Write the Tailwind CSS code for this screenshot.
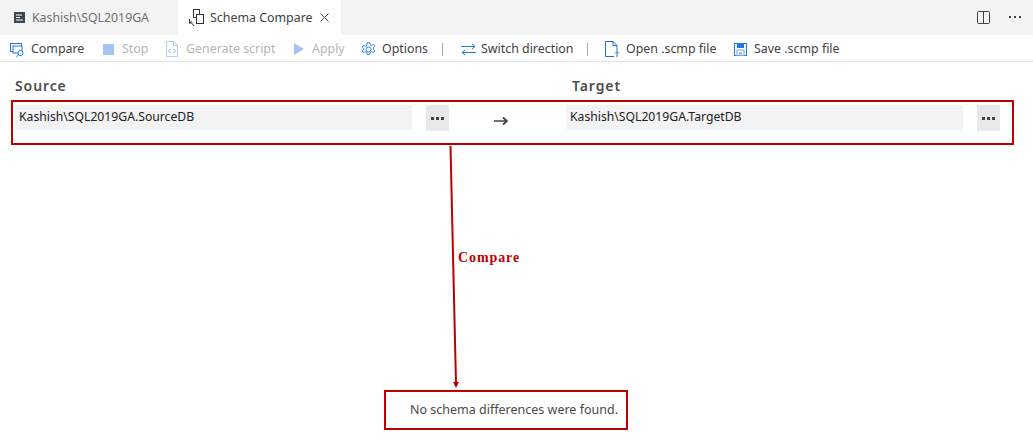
<!DOCTYPE html>
<html lang="en">
<head>
    <meta charset="UTF-8">
    <title>Schema Compare</title>
    <script src="https://cdn.jsdelivr.net/npm/@tailwindcss/browser@4"></script>
</head>
<body class="relative h-[443px] w-[1033px] overflow-hidden bg-white font-['Noto_Sans',sans-serif] text-[12.4px] text-[#424242]">

    <!-- Tabs -->
    <div class="flex h-[35px] items-center bg-[#f3f3f3]">
        <div class="flex h-full w-[178px] items-center pl-[14px] text-[12.3px] text-[#6f6f6f]">
            <svg class="mr-[7px] h-[11px] w-[11px]" viewBox="0 0 11 11"><rect width="11" height="11" fill="#3c4650"/><path d="M2 3h6M2 5.500h4M2 8h7" stroke="#fff" stroke-width="1"/></svg>
            <span class="pt-px">Kashish\SQL2019GA</span>
        </div>
        <div class="flex h-full w-[163px] items-center bg-white pl-[10px]">
            <svg class="mr-[6px] h-[19px] w-[16px]" viewBox="0 0 16 19" fill="none" stroke="#333"><rect x="5.500" y="1.500" width="6" height="8"/><rect x="8.500" y="6.500" width="7" height="9" fill="#fff"/><path d="M1.500 11v4h3M3.500 13l-2 2.500M6 18l-2-2.500" stroke-width="1"/></svg>
            <span class="pt-px">Schema Compare</span>
            <svg class="ml-[7px] h-[9px] w-[9px]" viewBox="0 0 9 9" stroke="#424242"><path d="M.5.5l8 8M8.500.5l-8 8"/></svg>
        </div>
        <div class="ml-auto mr-[12px] flex items-center gap-[19px]">
            <svg class="h-[14px] w-[13px]" viewBox="0 0 13 14" fill="none" stroke="#424242"><rect x=".5" y=".5" width="12" height="12" rx="1"/><path d="M6.500.5v12"/></svg>
            <svg class="h-[3px] w-[12px]" viewBox="0 0 12 3" fill="#424242"><rect x="0" width="2" height="2"/><rect x="5" width="2" height="2"/><rect x="10" width="2" height="2"/></svg>
        </div>
    </div>

    <!-- Toolbar -->
    <div class="flex h-[27px] items-center border-b border-[#e5e5e5] pl-[10px] pt-[2px]">
        <svg class="mr-[6px] h-[15px] w-[15px]" viewBox="0 0 15 15" fill="none" stroke="#1f78e6"><rect x=".5" y="1.500" width="11" height="8"/><rect x="3" y="4" width="9" height="7" fill="#fff"/><circle cx="10.500" cy="11" r="2.500" fill="#fff"/><path d="M8.500 13l-2 1.500" stroke="#1d5fb8"/></svg>
        <span class="w-[54px] whitespace-nowrap">Compare</span>
        <span class="ml-[18px] mr-[8px] h-[11px] w-[11px] bg-[#a3c4f2]"></span>
        <span class="w-[26px] whitespace-nowrap text-[#b5b5b5]">Stop</span>
        <svg class="ml-[18px] mr-[8px] h-[16px] w-[12px]" viewBox="0 0 12 16" fill="none" stroke="#b5cff2"><path d="M.5.5h7l4 4v11h-11zM7.500.5v4h4"/><path d="M4.500 8l-2 2 2 2M7.500 8l2 2-2 2" stroke="#8fb4ea"/></svg>
        <span class="w-[89px] whitespace-nowrap text-[#b5b5b5]">Generate script</span>
        <svg class="ml-[19px] mr-[8px] h-[12px] w-[10px]" viewBox="0 0 10 12" fill="#a3c4f2"><path d="M0 0l10 6-10 6z"/></svg>
        <span class="w-[33px] whitespace-nowrap text-[#b5b5b5]">Apply</span>
        <svg class="ml-[16px] mr-[6px] h-[15px] w-[15px]" viewBox="0 0 15 15" fill="none" stroke="#2f80e4"><circle cx="7.500" cy="7.500" r="2.500"/><path d="M6.200.7h2.600l.4 2 1.500.7 1.800-1 1.300 1.900-1.500 1.400v1.700l1.500 1.400-1.300 1.900-1.800-1-1.500.7-.4 2H6.200l-.4-2-1.500-.7-1.800 1-1.300-1.900 1.500-1.400V6.700L1.200 5.300l1.300-1.900 1.800 1 1.500-.7z"/></svg>
        <span class="w-[46px] whitespace-nowrap">Options</span>
        <span class="ml-[14px] h-[13px] w-px bg-[#a8a8a8]"></span>
        <svg class="ml-[18px] mr-[5px] h-[13px] w-[15px]" viewBox="0 0 15 13" fill="none" stroke="#1f78e6"><path d="M0 3.500h14M11 1l3 2.500L11 6M15 9.500H1M4 7L1 9.500 4 12"/></svg>
        <span class="w-[91px] whitespace-nowrap">Switch direction</span>
        <span class="ml-[15px] h-[13px] w-px bg-[#a8a8a8]"></span>
        <svg class="ml-[17px] mr-[6px] h-[16px] w-[15px]" viewBox="0 0 15 16" fill="none" stroke="#1d6fd6"><path d="M9 15.500H.5V.5H8l4 4V10M8 .5v4h4"/><path d="M12 16v-5M10 12.500l2-2 2 2"/></svg>
        <span class="w-[91px] whitespace-nowrap">Open .scmp file</span>
        <svg class="ml-[17px] mr-[7px] h-[13px] w-[13px]" viewBox="0 0 13 13"><rect x=".5" y=".5" width="12" height="12" fill="#fff" stroke="#1f78e6"/><rect x="3" y="1" width="7" height="4" fill="#1f78e6"/><rect x="3" y="7" width="7" height="5.500" fill="none" stroke="#6fa5e8"/><rect x="5" y="9" width="3" height="3.500" fill="#9fc3ee"/></svg>
        <span class="whitespace-nowrap">Save .scmp file</span>
    </div>

    <!-- Source and target -->
    <div class="flex h-[38px] items-end pb-[4px] pl-[15px] text-[14px] font-semibold tracking-[0.9px] text-[#4d4d4d]">
        <span class="w-[557px]">Source</span>
        <span>Target</span>
    </div>
    <div class="mx-[11px] flex h-[45px] w-[1003px] items-start border-2 border-[#c00000] pl-[2px] pt-[3px] text-[12.2px]">
        <div class="flex h-[25px] w-[397px] shrink-0 items-center bg-[#f3f3f3] pl-[4px] text-[#222]">Kashish\SQL2019GA.SourceDB</div>
        <div class="ml-[14px] flex h-[26px] w-[23px] shrink-0 items-center justify-center gap-[2px] bg-[#e8e8e8]">
            <span class="h-[3px] w-[3px] bg-[#424242]"></span><span class="h-[3px] w-[3px] bg-[#424242]"></span><span class="h-[3px] w-[3px] bg-[#424242]"></span>
        </div>
        <svg class="ml-[45px] mr-[58px] mt-[11px] h-[10px] w-[14px] shrink-0" viewBox="0 0 14 10" fill="none" stroke="#424242" stroke-width="1.700"><path d="M0 5h13M9 1.500l4 3.500-4 3.500"/></svg>
        <div class="flex h-[25px] w-[397px] shrink-0 items-center bg-[#f3f3f3] pl-[4px] text-[#222]">Kashish\SQL2019GA.TargetDB</div>
        <div class="ml-[14px] flex h-[26px] w-[23px] shrink-0 items-center justify-center gap-[2px] bg-[#e8e8e8]">
            <span class="h-[3px] w-[3px] bg-[#424242]"></span><span class="h-[3px] w-[3px] bg-[#424242]"></span><span class="h-[3px] w-[3px] bg-[#424242]"></span>
        </div>
    </div>

    <!-- Annotation -->
    <svg class="absolute left-0 top-0 h-[443px] w-[1033px]" viewBox="0 0 1033 443" fill="none">
        <path d="M450.500 146L456 384" stroke="#c00000" stroke-width="2"/>
        <path d="M453 382h6l-3 6z" fill="#c00000"/>
    </svg>
    <span class="absolute left-[458px] top-[250px] font-['Liberation_Serif',serif] text-[14px] font-bold leading-[16px] tracking-[0.9px] text-[#c00000]">Compare</span>

    <div class="absolute left-[384px] top-[390px] flex h-[40px] w-[244px] items-center border-2 border-[#c00000] pl-[24px] text-[12.5px] text-[#4a4a4a]">No schema differences were found.</div>

</body>
</html>
